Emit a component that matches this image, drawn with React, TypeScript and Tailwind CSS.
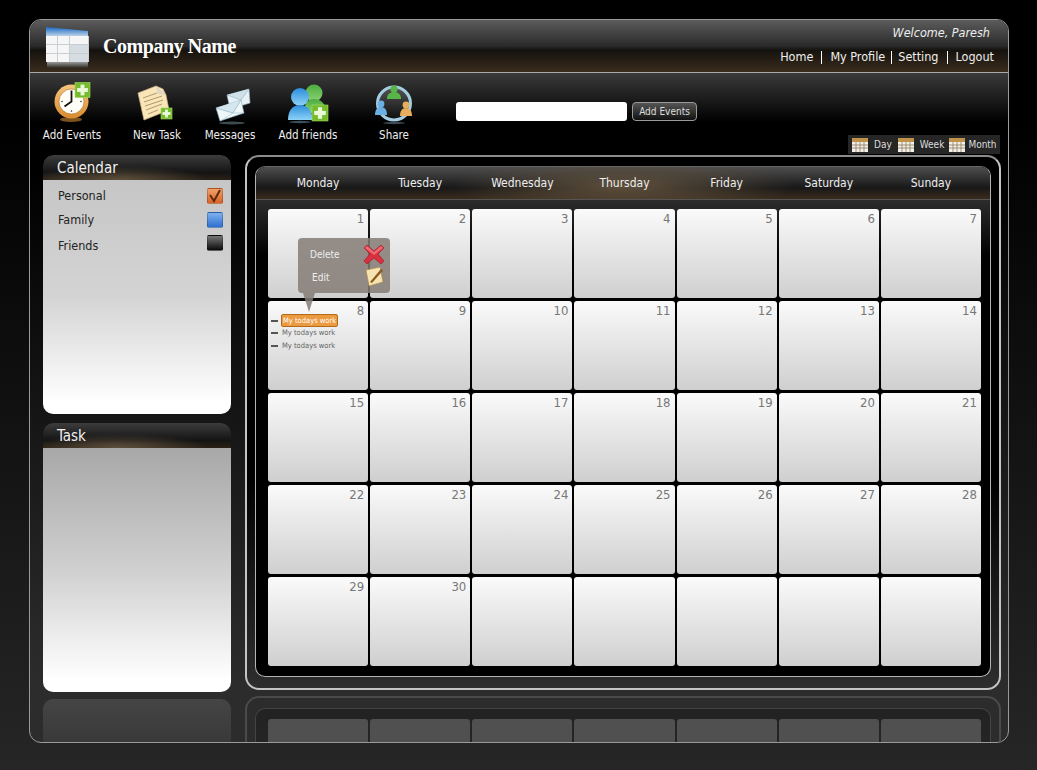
import * as React from "react";

const DAYS = ["Monday", "Tuesday", "Wednesday", "Thursday", "Friday", "Saturday", "Sunday"];
const CELLS = Array.from({ length: 35 }, (_, i) => (i < 30 ? i + 1 : null));

function PlusBadge({ x, y, size }: { x: number; y: number; size: number }) {
  const bar = size * 0.26;
  return (
    <g>
      <rect x={x} y={y} width={size} height={size} fill="#74bb2e" stroke="#a5dc62" strokeWidth="0.6" />
      <rect x={x + (size - bar) / 2} y={y + size * 0.14} width={bar} height={size * 0.72} fill="#eaf8d8" />
      <rect x={x + size * 0.14} y={y + (size - bar) / 2} width={size * 0.72} height={bar} fill="#eaf8d8" />
    </g>
  );
}

function ClockIcon() {
  return (
    <svg width="44" height="44" viewBox="0 0 44 44">
      <defs>
        <linearGradient id="clockRing" x1="0" y1="0" x2="0" y2="1">
          <stop offset="0" stopColor="#f7c57c" />
          <stop offset="1" stopColor="#d98a2e" />
        </linearGradient>
      </defs>
      <ellipse cx="21" cy="38.5" rx="11" ry="2.5" fill="#7a5220" />
      <circle cx="21.5" cy="20.5" r="17" fill="url(#clockRing)" />
      <circle cx="21.5" cy="20.5" r="12.5" fill="#fffef8" stroke="#a86f28" strokeWidth="0.6" />
      <path d="M21.5 9.5v11l-7 5" fill="none" stroke="#111" strokeWidth="1.8" />
      <circle cx="31" cy="20.5" r="0.8" fill="#333" />
      <circle cx="12" cy="20.5" r="0.8" fill="#333" />
      <circle cx="21.5" cy="30" r="0.8" fill="#333" />
      <PlusBadge x={25} y={1.5} size={15} />
    </svg>
  );
}

function TaskIcon() {
  return (
    <svg width="44" height="44" viewBox="0 0 44 44">
      <path d="M3 12 21 5l7 3 3 6 3 15-25 10Z" fill="#f9e5b8" stroke="#cdb582" strokeWidth="0.7" />
      <path d="M21 5l2 8 8 1Z" fill="#dcd6c6" />
      <path d="M8 17l14-5M9 21l18-6M10 25l18-6M11 29l16-6M13 33l10-4" stroke="#9c855a" strokeWidth="0.8" />
      <PlusBadge x={26} y={27} size={11} />
    </svg>
  );
}

function MessagesIcon() {
  return (
    <svg width="44" height="44" viewBox="0 0 44 44">
      <path d="M19 14 41 8l1 14-20 6Z" fill="#e7f1f5" stroke="#8fb4c6" strokeWidth="0.6" />
      <path d="M19 14 33 19 41 8" fill="#cfe0e8" stroke="#8fb4c6" strokeWidth="0.6" />
      <path d="M8 27 33 19l3 13-24 8Z" fill="#eef6f8" stroke="#84aabd" strokeWidth="0.6" />
      <path d="M8 27 25 32 33 19" fill="#d5e6ec" stroke="#84aabd" strokeWidth="0.6" />
      <path d="M12 40 25 32l11 0" fill="none" stroke="#a5c4d1" strokeWidth="0.6" />
      <ellipse cx="24" cy="42" rx="13" ry="1.4" fill="#3d4a50" />
    </svg>
  );
}

function FriendsIcon() {
  return (
    <svg width="44" height="44" viewBox="0 0 44 44">
      <defs>
        <linearGradient id="friendBlue" x1="0" y1="0" x2="0" y2="1">
          <stop offset="0" stopColor="#2a8edc" />
          <stop offset="1" stopColor="#8ed2f7" />
        </linearGradient>
        <linearGradient id="friendGreen" x1="0" y1="0" x2="0" y2="1">
          <stop offset="0" stopColor="#49ad3c" />
          <stop offset="1" stopColor="#8fd074" />
        </linearGradient>
      </defs>
      <circle cx="28" cy="12" r="8.5" fill="url(#friendGreen)" />
      <path d="M18 32c0-10 4-14 10-14s12 4 13 14Z" fill="url(#friendGreen)" />
      <circle cx="14" cy="16" r="9" fill="url(#friendBlue)" />
      <path d="M2 39c0-10 5-15 12-15s12 5 13 15Z" fill="url(#friendBlue)" />
      <ellipse cx="14" cy="41" rx="11" ry="1.2" fill="#39515f" />
      <PlusBadge x={26} y={24} size={16} />
    </svg>
  );
}

function ShareIcon() {
  return (
    <svg width="44" height="44" viewBox="0 0 44 44">
      <defs>
        <linearGradient id="shareCore" x1="0" y1="0" x2="0" y2="1">
          <stop offset="0" stopColor="#555" />
          <stop offset="1" stopColor="#0c0c0c" />
        </linearGradient>
      </defs>
      <circle cx="22" cy="22.5" r="16.5" fill="url(#shareCore)" stroke="#a5cde2" strokeWidth="3" />
      <circle cx="22" cy="8" r="3.6" fill="#58b548" />
      <path d="M15 18c0-5 3-7 7-7s7 2 7 7Z" fill="#58b548" />
      <circle cx="9" cy="23" r="3.4" fill="#6ab0e2" />
      <path d="M3 34c0-5 2-8 6-8s6 3 6 8Z" fill="#6ab0e2" />
      <circle cx="34" cy="24" r="3.4" fill="#e8ae5c" />
      <path d="M28 35c0-5 2-8 6-8s6 3 6 8Z" fill="#e8ae5c" />
      <ellipse cx="22" cy="42" rx="11" ry="1.2" fill="#3a4a55" />
    </svg>
  );
}

function LogoIcon() {
  const cols = [46, 58, 70, 80];
  const rows = [36, 45, 54];
  return (
    <svg width="46" height="42" viewBox="45 27 46 42">
      <defs>
        <linearGradient id="logoTop" x1="0" y1="0" x2="0" y2="1">
          <stop offset="0" stopColor="#1668c4" />
          <stop offset="1" stopColor="#bcd2e6" />
        </linearGradient>
        <linearGradient id="logoGlow" x1="0" y1="0" x2="0" y2="1">
          <stop offset="0" stopColor="#9a9a9a" />
          <stop offset="1" stopColor="#2a2620" />
        </linearGradient>
      </defs>
      <path d="M46 27 88 31v5H46Z" fill="url(#logoTop)" />
      <rect x="46" y="36" width="43" height="26" fill="#c9ced2" />
      {rows.map((y) =>
        cols.map((x) => (
          <rect key={`${x}-${y}`} x={x} y={y} width={x === 80 ? 8 : 11} height="8" fill={x > 60 && y > 40 ? "#d5dde3" : "#f6f6f6"} />
        ))
      )}
      <rect x="47" y="62" width="41" height="6" fill="url(#logoGlow)" />
    </svg>
  );
}

function MiniCalendar() {
  return (
    <svg width="18" height="16" viewBox="0 0 18 16" className="shrink-0">
      <rect x="1" y="1" width="16" height="14" fill="#f2f0ea" />
      <rect x="1" y="1" width="16" height="4" fill="#c0924a" />
      <path d="M1 8h16M1 11h16M5 5v10M9 5v10M13 5v10" stroke="#8f7a5a" strokeWidth="0.8" />
    </svg>
  );
}

function CheckBox({ tone, checked }: { tone: string; checked?: boolean }) {
  return (
    <span className={`flex h-4 w-4 items-center justify-center rounded-[2px] border border-black/20 ${tone}`}>
      {checked && (
        <svg width="14" height="14" viewBox="0 0 14 14">
          <path d="M2 6l4 6 6-11" fill="none" stroke="#5c2c08" strokeWidth="2" />
        </svg>
      )}
    </span>
  );
}

function PanelHeader({ title }: { title: string }) {
  return (
    <div className="flex h-[25px] items-center rounded-t-[10px] bg-[radial-gradient(ellipse_90px_14px_at_40%_100%,#5e4f3c,transparent),linear-gradient(to_bottom,#3c3c3c,#141414_70%,#2a2116)] pl-[14px] pt-[2px] text-[15px] text-[#f0f0f0]">
      {title}
    </div>
  );
}

function ToolItem({ label, width, icon, className }: { label: string; width: string; icon: React.ReactNode; className: string }) {
  return (
    <div className={`flex flex-col items-center ${width} ${className}`}>
      <div className="h-[44px]">{icon}</div>
      <span className="mt-[2px] whitespace-nowrap text-[11.5px] leading-[16px] text-[#eee]">{label}</span>
    </div>
  );
}

export default function App() {
  return (
    <div className="h-[770px] w-[1037px] overflow-hidden bg-[linear-gradient(to_bottom,#000,#000_15%,#262626)] pl-[29px] pt-[19px] font-['DejaVu_Sans',sans-serif] [font-stretch:condensed]">
      <div className="flex h-[724px] w-[980px] flex-col overflow-hidden rounded-[12px] border border-[#9a9a9a] bg-[linear-gradient(to_bottom,#000,#000_20%,#2c2c2c_92%)]">
        {/* Title bar */}
        <header className="flex h-[53px] shrink-0 items-start border-b border-[#a8a8a8] bg-[linear-gradient(to_bottom,#5c5c5c,#2a2a2a_50%,#15120e_58%,#3a2c1d)]">
          <div className="ml-[15px] mt-[7px]">
            <LogoIcon />
          </div>
          <div className="ml-[12px] mt-[12px] font-['Liberation_Serif',serif] text-[20px] font-bold leading-[28px] tracking-[-0.45px] text-white [font-stretch:normal]">
            Company Name
          </div>
          <div className="ml-auto flex flex-col items-end pr-[14px]">
            <div className="mr-[4px] mt-[4px] text-[12.5px] italic leading-[18px] text-[#eee]">Welcome, Paresh</div>
            <nav className="mt-[6px] flex items-center text-[12.5px] leading-[18px] text-[#eee]">
              <span>Home</span>
              <span className="mx-[8px] h-[13px] w-px bg-white" />
              <span>My Profile</span>
              <span className="mx-[6px] h-[13px] w-px bg-white" />
              <span>Setting</span>
              <span className="mx-[8px] h-[13px] w-px bg-white" />
              <span>Logout</span>
            </nav>
          </div>
        </header>

        {/* Toolbar */}
        <div className="flex h-[82px] shrink-0 bg-[linear-gradient(to_bottom,#3a3a3a,#000_60%)] pt-[8px]">
          <ToolItem label="Add Events" width="w-[56px]" className="ml-[14px]" icon={<ClockIcon />} />
          <ToolItem label="New Task" width="w-[48px]" className="ml-[33px]" icon={<TaskIcon />} />
          <ToolItem label="Messages" width="w-[46px]" className="ml-[26px]" icon={<MessagesIcon />} />
          <ToolItem label="Add friends" width="w-[58px]" className="ml-[26px]" icon={<FriendsIcon />} />
          <ToolItem label="Share" width="w-[44px]" className="ml-[35px]" icon={<ShareIcon />} />
          <div className="ml-[40px] mt-[21px] h-[19px] w-[171px] rounded-[3px] bg-white" />
          <button className="ml-[5px] mt-[21px] h-[19px] w-[65px] rounded-[4px] border border-[#999] bg-[linear-gradient(to_bottom,#555,#111)] text-[10px] leading-none text-[#ddd]">
            Add Events
          </button>
          <div className="ml-[151px] mt-[54px] flex h-[19px] w-[152px] items-center bg-[#262626] pl-[3px] text-[10px] text-[#ddd]">
            <MiniCalendar />
            <span className="ml-[5px]">Day</span>
            <span className="ml-[5px]">
              <MiniCalendar />
            </span>
            <span className="ml-[5px]">Week</span>
            <span className="ml-[4px]">
              <MiniCalendar />
            </span>
            <span className="ml-[2px]">Month</span>
          </div>
        </div>

        {/* Main area */}
        <div className="flex gap-[14px] pl-[13px]">
          <aside className="w-[188px] shrink-0">
            <section className="h-[259px] overflow-hidden rounded-[10px]">
              <PanelHeader title="Calendar" />
              <div className="h-[234px] bg-[linear-gradient(to_bottom,#c6c6c6,#d4d4d4_50%,#fff_95%)] pl-[15px] pr-[8px] pt-[4px] text-[12.5px] text-[#222]">
                <div className="flex h-[24px] items-center justify-between">
                  <span>Personal</span>
                  <CheckBox tone="bg-[linear-gradient(to_bottom,#f4a06a,#d8632a)]" checked />
                </div>
                <div className="flex h-[24px] items-center justify-between">
                  <span>Family</span>
                  <CheckBox tone="bg-[linear-gradient(to_bottom,#7fb1ee,#2f6fd0)]" />
                </div>
                <div className="flex h-[22px] items-center justify-between">
                  <span className="pt-[6px]">Friends</span>
                  <CheckBox tone="bg-[linear-gradient(to_bottom,#777,#0a0a0a)]" />
                </div>
              </div>
            </section>
            <section className="mt-[9px] h-[269px] overflow-hidden rounded-[10px]">
              <PanelHeader title="Task" />
              <div className="h-[244px] bg-[linear-gradient(to_bottom,#a8a8a8,#d0d0d0_50%,#fff_95%)]" />
            </section>
            <div className="mt-[7px] h-[60px] rounded-t-[10px] bg-[linear-gradient(to_bottom,#454545,#343434)]" />
          </aside>

          <div className="w-[756px] shrink-0">
            <section className="relative h-[535px] rounded-[14px] border-2 border-[#c4c4c4] border-t-[#8c8c8c] bg-[linear-gradient(to_bottom,#000,#000_60%,#2e2e2e)] px-[8px] pt-[9px]">
              <div className="h-[511px] overflow-hidden rounded-[10px] border border-[#b4b4b4] border-t-[#666] bg-black">
                <div className="grid h-[33px] grid-cols-7 items-center gap-x-[2px] border-b border-[#555] bg-[radial-gradient(ellipse_170px_32px_at_50%_60%,#5e4f3c,transparent),linear-gradient(to_bottom,#4e4e4e,#181818_65%,#3a2c1d)] pl-[12px] pr-[9px] text-center text-[12px] text-[#eee]">
                  {DAYS.map((day) => (
                    <div key={day}>{day}</div>
                  ))}
                </div>
                <div className="relative grid grid-cols-7 gap-x-[2px] gap-y-[3px] bg-[linear-gradient(to_bottom,#2c2c2c,#000_12%)] pl-[12px] pr-[9px] pt-[9px]">
                  {CELLS.map((n, i) => (
                    <div key={i} className="h-[89px] rounded-[3px] bg-[linear-gradient(to_bottom,#fafafa,#cfcfcf)] pr-[4px] text-right text-[13px] leading-[20px] text-[#777]">
                      {n}
                      {n === 8 && (
                        <ul className="mt-[-7px] text-left text-[7.5px] leading-[12.5px] text-[#666]">
                          <li className="flex items-center">
                            <span className="ml-[3px] mr-[3px] h-[2px] w-[7px] bg-[#555]" />
                            <span className="rounded-[2px] border border-[#b36a1a] bg-[#ec9a3f] px-px leading-[11px] text-white">My todays work</span>
                          </li>
                          <li className="flex items-center">
                            <span className="ml-[3px] mr-[4px] h-[2px] w-[7px] bg-[#555]" />
                            My todays work
                          </li>
                          <li className="flex items-center">
                            <span className="ml-[3px] mr-[4px] h-[2px] w-[7px] bg-[#555]" />
                            My todays work
                          </li>
                        </ul>
                      )}
                    </div>
                  ))}

                  {/* Context menu on the first event */}
                  <div className="absolute left-[42px] top-[38px] h-[55px] w-[92px] rounded-[4px] bg-[#857d75]/85 text-[10px] text-[#eee]">
                    <span className="absolute left-[12px] top-[9px]">Delete</span>
                    <span className="absolute left-[14px] top-[32px]">Edit</span>
                    <svg width="22" height="22" viewBox="0 0 22 22" className="absolute left-[65px] top-[5px]">
                      <path d="M4 2l7 6 7-6 3 3-6 6 6 7-3 3-7-6-7 6-3-3 6-7-6-6Z" fill="#d92f3e" stroke="#a01424" strokeWidth="0.6" />
                      <path d="M4 3l7 6 7-6 2 2-9 7-9-7Z" fill="#ee6a72" />
                    </svg>
                    <svg width="22" height="24" viewBox="0 0 22 24" className="absolute left-[65px] top-[27px]">
                      <path d="M3 5 17 2l3 15-14 4Z" fill="#f6e3b2" stroke="#b08a45" strokeWidth="0.7" />
                      <path d="M7 17 18 4l2 1.5L9 18Z" fill="#8a5a20" />
                    </svg>
                    <span className="absolute left-[5px] top-[55px] h-0 w-0 border-x-[6px] border-t-[19px] border-x-transparent border-t-[#857d75]/85" />
                  </div>
                </div>
              </div>
            </section>

            {/* Faded copy of the calendar under its frame */}
            <div className="mt-[6px] h-[60px] rounded-t-[14px] border-2 border-b-0 border-[#4a4a4a] px-[8px] pt-[10px]">
              <div className="h-[50px] rounded-t-[10px] border border-b-0 border-[#444] bg-[linear-gradient(to_bottom,#222,#262626)] pl-[12px] pr-[9px] pt-[10px]">
                <div className="grid grid-cols-7 gap-x-[2px]">
                  {DAYS.map((day) => (
                    <div key={day} className="h-[30px] rounded-t-[3px] bg-[#505050]" />
                  ))}
                </div>
              </div>
            </div>
          </div>
        </div>
      </div>
    </div>
  );
}
